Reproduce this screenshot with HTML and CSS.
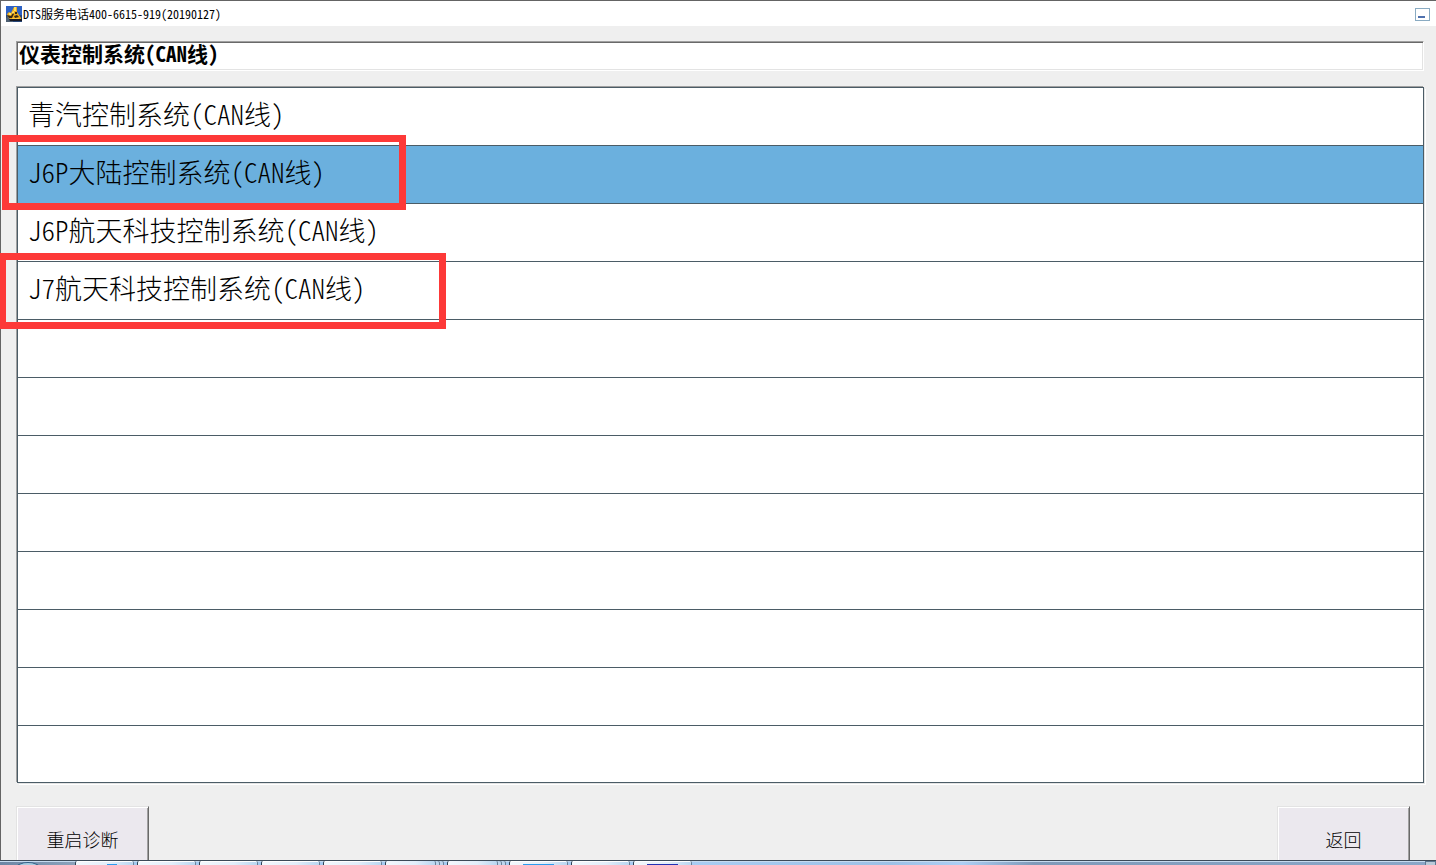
FILE: index.html
```html
<!DOCTYPE html>
<html lang="zh-CN">
<head>
    <meta charset="UTF-8">
    <meta name="viewport" content="width=device-width, initial-scale=1.0">
    <title>DTS服务电话400-6615-919(20190127)</title>
    <link rel="stylesheet" href="styles.css">
</head>
<body>
    <div class="window">
        <header class="titlebar">
            <svg class="app-icon" viewBox="0 0 16 16" aria-hidden="true">
                <rect width="16" height="16" fill="#2d62c4"/>
                <path d="M0 9h16v7H0z" fill="#27477a"/>
                <path d="M0 12l3-2 4 4v2H0z" fill="#4d5f72"/>
                <path d="M1 8l2-2 2 1 2-4 1-2h3v5l2 3 2 3v2H5l-3-3z" fill="#f0ae1c"/>
                <path d="M8 1h2v4H8zM3 7h2v2H3zM6 6l2-1v3H6z" fill="#ffe262"/>
                <path d="M1 9l4 1 2-3 1 1-2 4H3zM9 6h2v2H9zM8 10l3-1 2 2-4 1z" fill="#332716"/>
                <path d="M3 13h13v2H4z" fill="#151824"/>
                <path d="M6 12h7v1H6z" fill="#ffc93a"/>
            </svg>
            <span class="title">DTS服务电话400-6615-919(20190127)</span>
            <button class="minimize" type="button" aria-label="最小化"></button>
        </header>
        <main class="content">
            <input class="path" type="text" value="仪表控制系统(CAN线)" aria-label="当前系统" readonly>
            <ul class="system-list">
                <li>青汽控制系统(CAN线)</li>
                <li class="selected">J6P大陆控制系统(CAN线)<span class="mark mark-j6p"></span></li>
                <li>J6P航天科技控制系统(CAN线)</li>
                <li>J7航天科技控制系统(CAN线)<span class="mark mark-j7"></span></li>
                <li></li>
                <li></li>
                <li></li>
                <li></li>
                <li></li>
                <li></li>
                <li></li>
                <li></li>
            </ul>
            <div class="actions">
                <button class="action" type="button">重启诊断</button>
                <button class="action" type="button">返回</button>
            </div>
        </main>
    </div>
    <footer class="taskbar">
        <div class="start"></div>
        <div class="task cyan"></div>
        <div class="task"></div>
        <div class="task"></div>
        <div class="task"></div>
        <div class="task"></div>
        <div class="task stacked"></div>
        <div class="task stacked"></div>
        <div class="task blue"></div>
        <div class="task"></div>
        <div class="task navy"></div>
        <div class="show-desktop"></div>
    </footer>
</body>
</html>
```
FILE: styles.css
```css
* {
    box-sizing: border-box;
}
body {
    display: flex;
    flex-direction: column;
    height: 100vh;
    margin: 0;
    overflow: hidden;
    background: #efefef;
    color: #000;
    font-family: "Noto Sans CJK SC", sans-serif;
    font-weight: 300;
    /* half-width latin, so two letters take one ideograph */
    font-feature-settings: "hwid";
}
button, input {
    font-family: inherit;
    font-weight: inherit;
    font-feature-settings: inherit;
    color: inherit;
}
.window {
    flex: 1;
    min-height: 0;
    border-top: 1px solid #646464;
    border-left: 1px solid #646464;
}
.titlebar {
    display: flex;
    align-items: center;
    height: 25px;
    padding: 0 6px 0 5px;
    background: #fff;
}
.app-icon {
    width: 16px;
    height: 16px;
    margin-right: 1px;
}
.title {
    font-size: 12px;
    line-height: 24px;
    font-weight: 400;
}
.minimize {
    display: flex;
    align-items: flex-end;
    width: 15px;
    height: 13px;
    margin-left: auto;
    margin-top: 2px;
    padding: 2px;
    border: 1px solid #8aabc2;
    background: #fff;
}
.minimize::before {
    content: "";
    width: 7px;
    height: 2px;
    background: #4f71ae;
}
.content {
    display: flex;
    flex-direction: column;
    padding: 15px 10px 0 15px;
}
.path {
    height: 30px;
    margin: 0 2px 16px 0;
    padding: 0 0 6px 2px;
    border: 1px solid;
    border-color: #a0a0a0 #fff #fff #a0a0a0;
    box-shadow: inset 1px 1px #696969, inset -1px -1px #e3e3e3;
    outline: none;
    background: #fff;
    font-size: 21px;
    line-height: 22px;
    font-weight: 700;
}
.system-list {
    margin: 0 2px 23px 1px;
    padding: 0;
    list-style: none;
    background: #fff;
    border: 1px solid #4b5c66;
    box-shadow: 1px 1px #e3e3e3, 2px 2px #fff, -1px -1px #a0a0a0;
}
.system-list li {
    position: relative;
    height: 58px;
    padding-left: 10px;
    border-bottom: 1px solid #4b5c66;
    font-size: 27px;
    line-height: 52px;
    white-space: nowrap;
}
.system-list li:last-child {
    height: 56px;
    border-bottom: none;
}
.system-list .selected {
    background: #6bb0de;
}
/* red highlight frames over the list */
.mark {
    position: absolute;
    z-index: 1;
    border: 7px solid #fd3938;
}
.mark-j6p {
    left: -16px;
    top: -11px;
    width: 404px;
    height: 75px;
}
.mark-j7 {
    left: -19px;
    top: -9px;
    width: 447px;
    height: 76px;
}
.actions {
    display: flex;
    justify-content: space-between;
    padding-right: 16px;
}
.action {
    width: 133px;
    height: 66px;
    padding: 0;
    border: 1px solid;
    border-color: #e3e3e3 #696969 #696969 #e3e3e3;
    box-shadow: inset 1px 1px #fff, inset -1px -1px #a0a0a0;
    background: #ebe8ee;
    font-size: 18px;
}
.taskbar {
    position: relative;
    z-index: 2;
    display: flex;
    height: 5px;
    overflow: hidden;
    border-top: 1px solid #3c4a58;
    background: linear-gradient(90deg, #6b86a5 0, #8ca3bc 75px, #a4caef 76px, #a9cdf3 48%, #9dc1e6 62%, #adcff5 67%, #7f9ab9 72%, #8aa7c8 100%);
    box-shadow: inset 0 1px #c6dbf0;
}
.start {
    width: 24px;
    height: 12px;
    margin: 1px 35px 0 16px;
    border: 1px solid #2e5f86;
    border-radius: 50%;
    background: #a8cbe0;
}
.task {
    width: 59px;
    height: 12px;
    margin-right: 3px;
    border-left: 1px solid #2f4152;
    border-right: 1px solid #6b8299;
    border-radius: 2px 2px 0 0;
    background: linear-gradient(90deg, #f3f8fd, #e2eefa 60%, #bad7f1);
    box-shadow: inset 0 1px #fff;
}
.stacked {
    width: 51px;
    margin-right: 11px;
    box-shadow: 3px 0 #bdd6ee, 4px 0 #6b8299, 7px 0 #bdd6ee, 8px 0 #6b8299;
}
.cyan::before, .blue::before, .navy::before {
    content: "";
    display: block;
    width: 31px;
    height: 1px;
    margin: 3px auto 0;
    background: #2b9cf0;
}
.cyan::before {
    width: 10px;
    margin-left: 31px;
}
.navy::before {
    background: #2431b5;
}
.show-desktop {
    width: 11px;
    height: 12px;
    margin-left: auto;
    border: 1px solid #5d7892;
    background: #b9cad9;
}
```
